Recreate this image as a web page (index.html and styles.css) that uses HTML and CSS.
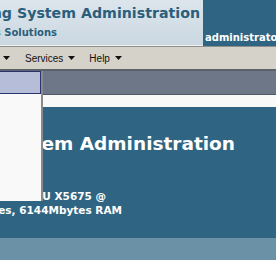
FILE: index.html
```html
<!DOCTYPE html>
<html>
<head>
<meta charset="utf-8">
<link rel="stylesheet" href="styles.css">
</head>
<body>
<div class="page">
  <header class="header">
    <div class="brand">
      <div class="brand-title"><span>Cisco Unified Operating System Administration</span></div>
      <div class="brand-sub"><span>For Cisco Unified Communications Solutions</span></div>
    </div>
    <div class="user">administrator | Search Documentation | About | Logout</div>
  </header>
  <nav class="menubar">
    <div class="menu-first">
      <span class="menu-item">Software Upgrades <svg class="caret" width="7" height="4" viewBox="0 0 7 4"><polygon points="0,0 7,0 3.5,4"/></svg></span>
    </div>
    <span class="menu-item">Services <svg class="caret" width="7" height="4" viewBox="0 0 7 4"><polygon points="0,0 7,0 3.5,4"/></svg></span>
    <span class="menu-item">Help <svg class="caret" width="7" height="4" viewBox="0 0 7 4"><polygon points="0,0 7,0 3.5,4"/></svg></span>
  </nav>
  <div class="toolbar"></div>
  <div class="gap"></div>
  <main class="content">
    <h1 class="title"><span>Cisco Unified Operating System Administration</span></h1>
    <div class="info">
      <div class="line l1"><span>VMware Installation: 2 vCPU Intel Xeon CPU X5675 @</span></div>
      <div class="line l2"><span>3.07GHz, disk 1: 80Gbytes, 6144Mbytes RAM</span></div>
    </div>
  </main>
  <div class="footer"></div>
  <div class="dropdown">
    <div class="dd-item"></div>
    <div class="dd-body"></div>
  </div>
</div>
</body>
</html>
```

FILE: styles.css
```css
html, body {
  margin: 0;
  padding: 0;
  background: #6a91a6;
}
.page {
  position: relative;
  width: 276px;
  height: 260px;
  overflow: hidden;
  font-family: "DejaVu Sans", Verdana, sans-serif;
}
.header {
  display: flex;
  height: 46px;
  border-bottom: 1px solid #8e8e8e;
  background: #f2f2f2;
}
.brand {
  width: 203px;
  height: 45px;
  background: linear-gradient(180deg, #dce5ec 0%, #cbd8e1 100%);
  overflow: visible;
}
.brand-title {
  display: flex;
  justify-content: flex-end;
  width: 200px;
  padding-top: 3px;
  height: 20px;
  line-height: 20px;
  font-size: 14.2px;
  font-weight: bold;
  color: #2a5e7b;
  white-space: nowrap;
}
.brand-sub {
  display: flex;
  justify-content: flex-end;
  width: 57px;
  margin-top: 3px;
  height: 14px;
  line-height: 14px;
  font-size: 10px;
  font-weight: bold;
  color: #2a5e7b;
  white-space: nowrap;
}
.user {
  flex: 1;
  height: 46px;
  box-sizing: border-box;
  background: #2f6582;
  color: #ffffff;
  font-size: 10px;
  font-weight: bold;
  line-height: 12px;
  white-space: nowrap;
  overflow: hidden;
  display: flex;
  align-items: flex-end;
  padding: 0 0 2px 2px;
}
.menubar {
  display: flex;
  align-items: center;
  height: 22px;
  background: #d5d2ca;
  border-bottom: 2px solid #5d6168;
  font-family: "Liberation Sans", Arial, sans-serif;
  font-size: 10px;
  color: #111;
  white-space: nowrap;
}
.menu-first {
  display: flex;
  justify-content: flex-end;
  width: 10px;
  margin-right: 15px;
}
.menu-first .menu-item {
  margin-right: 0;
}
.menu-item {
  display: inline-flex;
  align-items: center;
  margin-right: 14px;
}
.caret {
  margin-left: 5px;
  fill: #111;
}
.toolbar {
  height: 23px;
  background: #6d7788;
  border-bottom: 1px solid #4e5868;
}
.gap {
  height: 12px;
  background: #f9f9f9;
}
.content {
  height: 131px;
  background: #2f6582;
  color: #ffffff;
  overflow: hidden;
}
.title {
  margin: 0;
  padding-top: 25px;
  display: flex;
  justify-content: flex-end;
  width: 235px;
  height: 24px;
  line-height: 24px;
  font-size: 18.5px;
  font-weight: bold;
  white-space: nowrap;
}
.info {
  margin-top: 33px;
  font-size: 10.5px;
  font-weight: bold;
  line-height: 14px;
  white-space: nowrap;
}
.line {
  display: flex;
  justify-content: flex-end;
}
.l1 { width: 106px; }
.l2 { width: 122px; }
.footer {
  height: 22px;
  background: #6a91a6;
}
.dropdown {
  position: absolute;
  left: 0;
  top: 71px;
  width: 41px;
  height: 130px;
  background: #f9f9f9;
  border-right: 2px solid #8a8a8a;
}
.dd-item {
  height: 21px;
  background: #b6bdd9;
  border: 1px solid #2b3472;
  border-left: none;
}
```
